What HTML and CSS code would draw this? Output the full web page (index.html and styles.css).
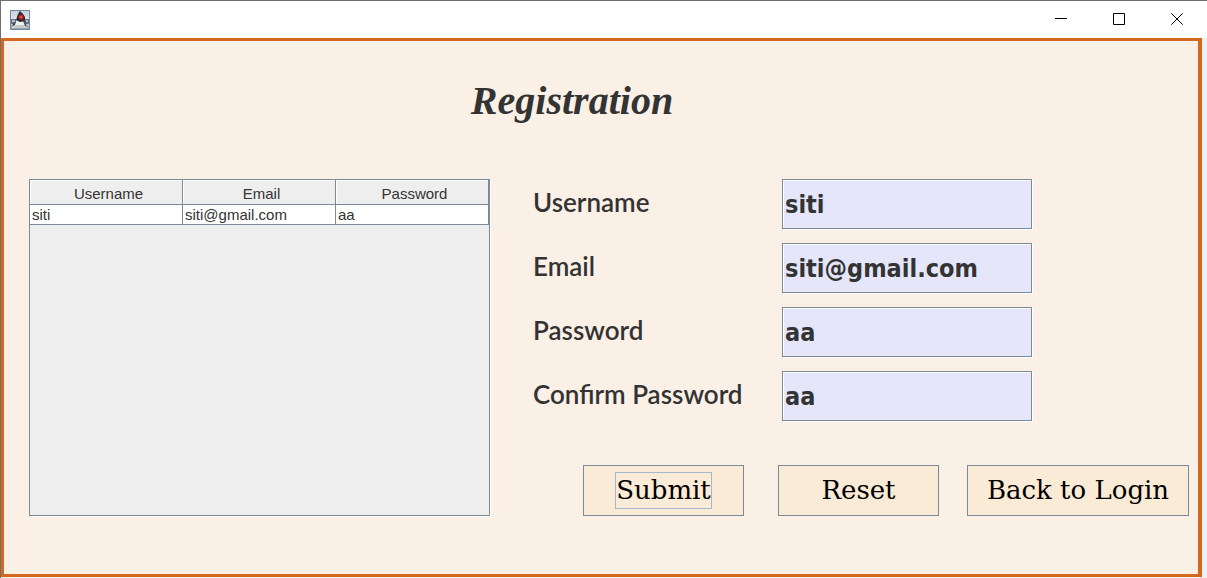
FILE: index.html
```html
<!DOCTYPE html>
<html lang="en">
<head>
<meta charset="utf-8">
<title>Registration</title>
<link rel="stylesheet" href="styles.css">
</head>
<body>
<div class="window">
  <header class="titlebar">
    <svg class="app-icon" width="20" height="20" viewBox="0 0 20 20" aria-hidden="true">
      <defs>
        <linearGradient id="sky" x1="0" y1="0" x2="0" y2="1">
          <stop offset="0" stop-color="#c3d0df"/><stop offset=".5" stop-color="#e0e7f0"/><stop offset="1" stop-color="#8a9bb0"/>
        </linearGradient>
      </defs>
      <rect x=".5" y=".5" width="19" height="19" fill="url(#sky)" stroke="#75889f"/>
      <path d="M1 9h5l1 2v3H1zM14 9h5v5h-5z" fill="#67717d"/>
      <path d="M2 10h3v2H2zM16 10h2v2h-2z" fill="#b5bcc4"/>
      <path d="M7 9l-2 5-3 2v2h15v-3l-2-2-1-5z" fill="#f1f1ee"/>
      <path d="M6 15h8l3 3H3z" fill="#c8c9c8"/>
      <path d="M10 1l-2 3-2 6 4 2 5-1v-4l-2-3z" fill="#26282c"/>
      <path d="M14 9l2 5 1 3-2-1-2-5zM6 11l-3 3-1 3 3-2z" fill="#3f454c"/>
      <circle cx="11" cy="7" r="2.5" fill="#cf1f20"/>
      <circle cx="11" cy="7" r="1" fill="#ff5a50"/>
    </svg>
    <div class="window-controls">
      <button class="control" type="button" aria-label="Minimize"><svg width="12" height="12" viewBox="0 0 12 12"><path d="M0 5.5h12"/></svg></button>
      <button class="control" type="button" aria-label="Maximize"><svg width="12" height="12" viewBox="0 0 12 12"><path d="M.5.5h11v11H.5z"/></svg></button>
      <button class="control" type="button" aria-label="Close"><svg width="12" height="12" viewBox="0 0 12 12"><path d="M.3.3l11.4 11.4M11.7.3L.3 11.7"/></svg></button>
    </div>
  </header>
  <main class="panel">
    <h1 class="heading">Registration</h1>
    <div class="content">
      <div class="table-pane">
        <table class="users">
          <thead><tr><th>Username</th><th>Email</th><th>Password</th></tr></thead>
          <tbody><tr><td>siti</td><td>siti@gmail.com</td><td>aa</td></tr></tbody>
        </table>
      </div>
      <form class="form">
        <div class="fields">
          <label for="username">Username</label><input id="username" type="text" value="siti">
          <label for="email">Email</label><input id="email" type="text" value="siti@gmail.com">
          <label for="password">Password</label><input id="password" type="text" value="aa">
          <label for="confirm">Confirm Password</label><input id="confirm" type="text" value="aa">
        </div>
        <div class="actions">
          <div class="action-pair">
            <button class="button" type="button"><span class="focused">Submit</span></button>
            <button class="button" type="button">Reset</button>
          </div>
          <button class="button button-wide" type="button">Back to Login</button>
        </div>
      </form>
    </div>
  </main>
</div>
</body>
</html>
```
FILE: styles.css
```css
* { box-sizing: border-box; }

body {
  margin: 0;
  background: #f0f0f0;
  color: #333;
}

.window {
  min-height: 100vh;
  display: flex;
  flex-direction: column;
  border: 1px solid #6d6d72;
  border-width: 1px 0 0 1px;
  padding-bottom: 1px;
}

.titlebar {
  height: 37px;
  display: flex;
  align-items: center;
  justify-content: space-between;
  padding: 0 1px 0 9px;
  background: #fff;
}

.app-icon { display: block; }

.window-controls { display: flex; }

.control {
  width: 58px;
  height: 37px;
  padding: 0 0 2px;
  border: 0;
  background: transparent;
  display: flex;
  align-items: center;
  justify-content: center;
}

.control svg {
  fill: none;
  stroke: #000;
  stroke-width: 1;
}

.panel {
  flex: 1;
  margin-right: 5px;
  border: 3px solid #d2691e;
  border-right-width: 4px;
  background: #faf0e6;
}

.heading {
  margin: 0;
  padding: 36px 58px 0 0;
  text-align: center;
  font: italic bold 40px/48px "Brush Script MT", "Liberation Serif", serif;
}

.content {
  display: flex;
  gap: 43px;
  padding: 54px 9px 0 25px;
}

.table-pane {
  flex: 0 1 461px;
  border: 1px solid #7a8a99;
  background: #eee;
  box-shadow: 1px 1px 0 #fff;
}

.users {
  width: 100%;
  table-layout: fixed;
  border-collapse: separate;
  border-spacing: 0;
  font: 15px/19px "Liberation Sans", Arial, sans-serif;
}

.users th,
.users td {
  border: 1px solid #7a8a99;
  border-width: 0 1px 1px 0;
}

.users th {
  height: 25px;
  padding: 3px 0 0 5px;
  font-weight: normal;
  text-align: center;
  background: #eee;
  box-shadow: inset 1px 1px 0 #fff;
}

.users td {
  height: 20px;
  padding: 0 1px 0 2px;
  background: #fff;
}

.form { flex: 1; }

.fields {
  display: grid;
  grid-template-columns: 249px 250px;
  row-gap: 14px;
  align-items: center;
}

.fields label {
  padding-bottom: 4px;
  font: 600 26px/32px Lato, sans-serif;
}

.fields input {
  width: 100%;
  height: 50px;
  padding: 0 2px;
  border: 1px solid #7a8a99;
  border-radius: 0;
  outline: 0;
  background: #e6e6fa;
  box-shadow: 1px 1px 0 #fff, inset 1px 1px 0 #fff;
  color: #333;
  font: bold 25px/32px Tahoma, "DejaVu Sans Condensed", sans-serif;
}

.actions {
  display: flex;
  justify-content: flex-end;
  gap: 28px;
  padding-top: 44px;
}

.action-pair {
  display: flex;
  gap: 34px;
}

.button {
  width: 161px;
  height: 51px;
  padding: 0;
  border: 1px solid #7a8a99;
  background: #faebd7;
  color: #000;
  font: 26px/35px "Bookman Old Style", "DejaVu Serif", serif;
}

.button-wide { width: 222px; }

.focused {
  display: inline-block;
  border: 1px solid #a3b8cc;
}
```
